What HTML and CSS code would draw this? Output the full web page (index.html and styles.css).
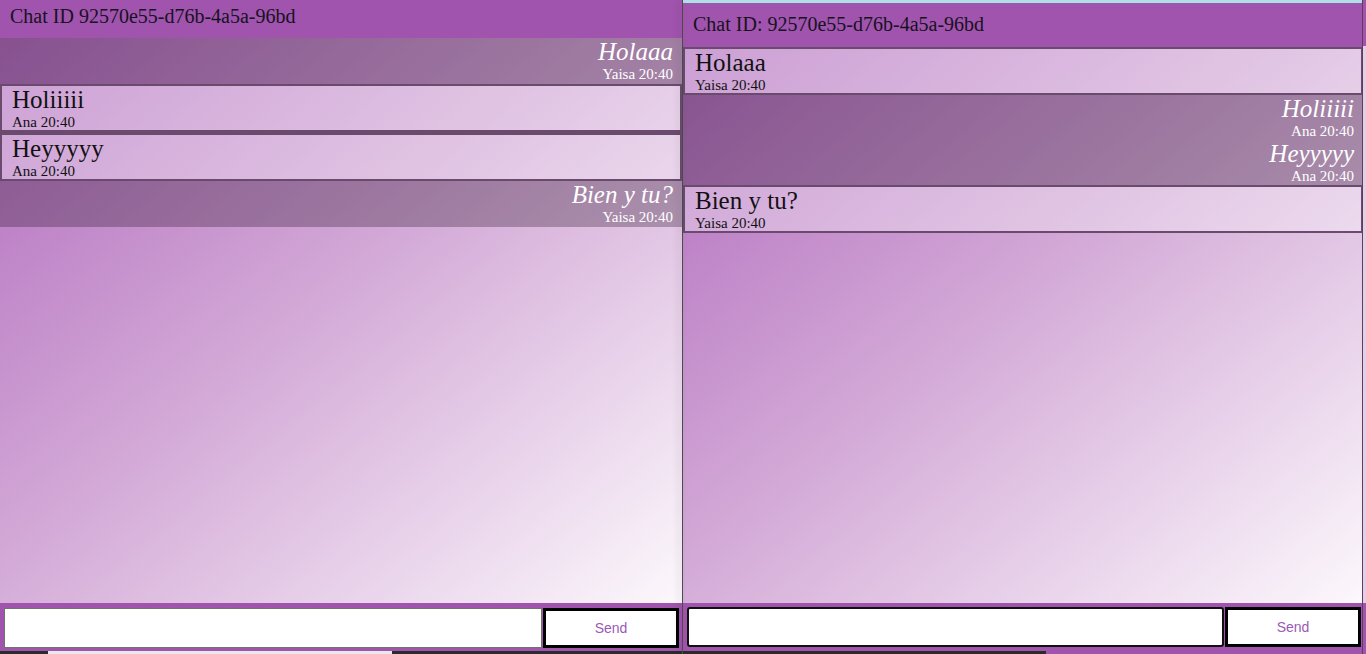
FILE: index.html
```html
<!DOCTYPE html>
<html lang="es">
<head>
<meta charset="utf-8">
<title>Chat</title>
<link rel="stylesheet" href="styles.css">
</head>
<body>
<div class="screen">
  <section class="win win-left">
    <header class="chat-header head-left">Chat ID 92570e55-d76b-4a5a-96bd</header>
    <main class="messages">
      <div class="msg own"><p class="text">Holaaa</p><span class="meta">Yaisa 20:40</span></div>
      <div class="msg other"><p class="text">Holiiiii</p><span class="meta">Ana 20:40</span></div>
      <div class="msg other"><p class="text">Heyyyyy</p><span class="meta">Ana 20:40</span></div>
      <div class="msg own"><p class="text">Bien y tu?</p><span class="meta">Yaisa 20:40</span></div>
    </main>
    <footer class="composer comp-left">
      <input class="field field-plain" type="text">
      <button class="send">Send</button>
    </footer>
    <div class="strip strip-left"><span class="dk a"></span><span class="lt b"></span><span class="dk c"></span></div>
  </section>
  <div class="divider"></div>
  <section class="win win-right">
    <div class="topline"></div>
    <header class="chat-header head-right">Chat ID: 92570e55-d76b-4a5a-96bd</header>
    <main class="messages">
      <div class="msg other"><p class="text">Holaaa</p><span class="meta">Yaisa 20:40</span></div>
      <div class="own-group">
        <div class="msg own"><p class="text">Holiiiii</p><span class="meta">Ana 20:40</span></div>
        <div class="msg own"><p class="text">Heyyyyy</p><span class="meta">Ana 20:40</span></div>
      </div>
      <div class="msg other"><p class="text">Bien y tu?</p><span class="meta">Yaisa 20:40</span></div>
    </main>
    <footer class="composer comp-right">
      <input class="field field-focus" type="text">
      <button class="send">Send</button>
    </footer>
    <div class="strip strip-right"><span class="dk d"></span><span class="pu e"></span></div>
  </section>
  <div class="edge"></div>
</div>
</body>
</html>
```

FILE: styles.css
```css
html, body {
  margin: 0;
  padding: 0;
  height: 100%;
  overflow: hidden;
  background: #2b2b2b;
}

.screen {
  display: flex;
  width: 1366px;
  height: 654px;
  font-family: "Liberation Serif", "Times New Roman", serif;
}

.win {
  display: flex;
  flex-direction: column;
  height: 654px;
  background: #a154ae;
}

.win-left { width: 682px; }
.win-right { width: 680px; }

.divider {
  width: 1px;
  background: #4b4b4b;
  position: relative;
  box-shadow: -3px 0 6px rgba(0, 0, 0, 0.28);
  z-index: 2;
}

.edge {
  width: 3px;
  display: flex;
  flex-direction: column;
  background: linear-gradient(#a154ae 0 46px, #e3cfe6 46px 603px, #a154ae 603px);
  border-left: 1px solid #5a3f5e;
  margin-left: -1px;
}

.topline {
  height: 3px;
  background: #b0e0e6;
}

.chat-header {
  color: #16121e;
  font-size: 20px;
  line-height: 23px;
  padding-left: 10px;
}

.head-left {
  padding-top: 5px;
  height: 33px;
}

.head-right {
  padding-top: 10px;
  height: 34px;
}

.messages {
  flex: 1;
  display: flex;
  flex-direction: column;
  background: linear-gradient(to bottom right, #b16cbe 0%, #d2a7d6 45%, #fcf8fc 100%);
}

.msg .text {
  margin: 0;
  font-size: 25px;
  line-height: 28px;
}

.msg .meta {
  display: block;
  font-size: 15px;
  line-height: 17px;
}

.own {
  text-align: right;
  padding-right: 9px;
  color: #ffffff;
  background: rgba(40, 20, 40, 0.3);
}

.own .text { font-style: italic; }

.own-group .own { background: transparent; }
.own-group { background: rgba(40, 20, 40, 0.3); }

.win-left .own { min-height: 46px; }

.other {
  border: 2px solid #6a4b6e;
  padding-left: 10px;
  color: #111111;
  background: rgba(255, 255, 255, 0.35);
  height: 44px;
}

.other + .other { margin-top: 1px; box-shadow: 0 -1px 0 #6a4b6e; }

.composer {
  display: flex;
  height: 40px;
  padding-top: 5px;
  padding-bottom: 3px;
}

.comp-left {
  padding-left: 4px;
  padding-right: 3px;
}

.comp-right {
  padding-top: 4px;
  padding-bottom: 4px;
  padding-left: 4px;
  padding-right: 2px;
}

.field {
  flex: 1;
  margin: 0;
  background: #ffffff;
  box-sizing: border-box;
  height: 40px;
  outline: none;
}

.field-plain {
  border: 1px solid #6f7468;
  border-radius: 0;
}

.field-focus {
  border: 2px solid #111111;
  border-radius: 3px;
}

.send {
  width: 136px;
  height: 40px;
  margin: 0 0 0 1px;
  box-sizing: border-box;
  background: #ffffff;
  border: 3px solid #000000;
  border-radius: 0;
  color: #9b59b6;
  font-family: "Liberation Sans", Arial, sans-serif;
  font-size: 14px;
  padding: 0;
}

.strip {
  display: flex;
  height: 3px;
}

.strip .dk { background: #2b2b2b; }
.strip .lt { background: #e9e9e9; }
.strip .pu { background: #a154ae; }

.strip-left .a { width: 48px; }
.strip-left .b { width: 344px; }
.strip-left .c { flex: 1; }

.strip-right .d { width: 363px; }
.strip-right .e { flex: 1; }
```
